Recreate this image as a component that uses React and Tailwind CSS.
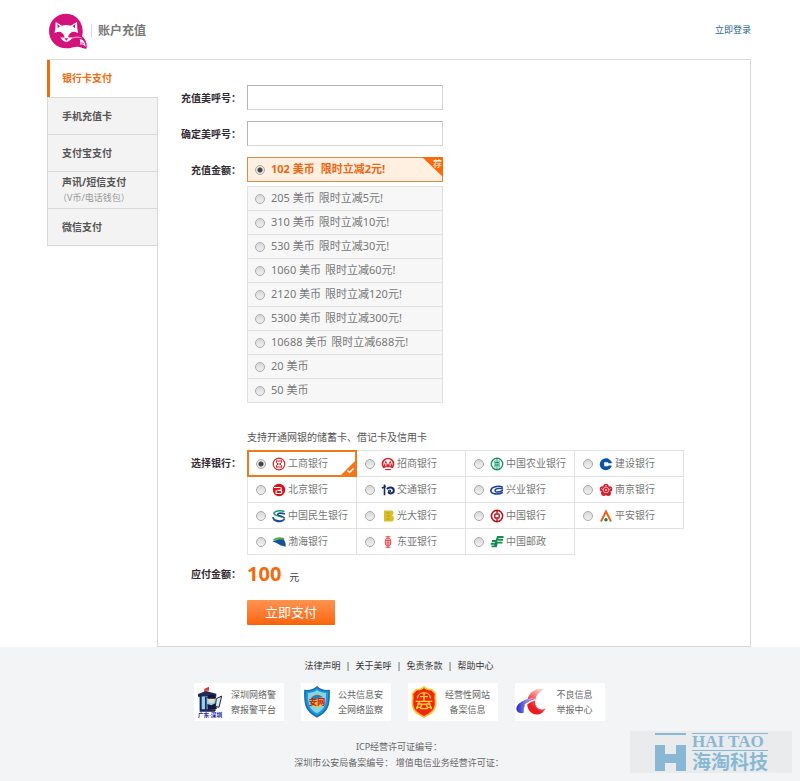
import { useState } from "react";

const tabs = [
  { title: "银行卡支付" },
  { title: "手机充值卡" },
  { title: "支付宝支付" },
  { title: "声讯/短信支付", note: "（V币/电话钱包）" },
  { title: "微信支付" },
];

const amounts = [
  { coins: "205 美币", offer: "限时立减5元!" },
  { coins: "310 美币", offer: "限时立减10元!" },
  { coins: "530 美币", offer: "限时立减30元!" },
  { coins: "1060 美币", offer: "限时立减60元!" },
  { coins: "2120 美币", offer: "限时立减120元!" },
  { coins: "5300 美币", offer: "限时立减300元!" },
  { coins: "10688 美币", offer: "限时立减688元!" },
  { coins: "20 美币" },
  { coins: "50 美币" },
];

const banks = [
  {
    name: "工商银行",
    mark: (
      <g fill="none" stroke="#d8232a">
        <circle cx="7" cy="7" r="5.8" strokeWidth="1.2" />
        <path d="M4.500 3.500v2l1.500 1.500-1.500 1.500v2M9.500 3.500v2L8 7l1.500 1.500v2M4.500 4h5M4.500 10h5M5.500 7h3" strokeWidth="1" />
      </g>
    ),
  },
  {
    name: "招商银行",
    mark: (
      <g>
        <circle cx="7" cy="7" r="5.500" fill="none" stroke="#d8232a" strokeWidth="1.700" />
        <path d="M2 10.200 4.800 3.400 7 8l2.200-4.600 2.800 6.800z" fill="#d8232a" />
        <path d="M4.800 6v3.200M9.200 6v3.200" stroke="#fff" strokeWidth="1" />
        <path d="M2.500 11.500h9" stroke="#fff" strokeWidth="1" />
      </g>
    ),
  },
  {
    name: "中国农业银行",
    mark: (
      <g fill="none" stroke="#16936a">
        <circle cx="7" cy="7" r="5.700" strokeWidth="1.400" />
        <path d="M7 2v10.500M5 3.500v7M9 3.500v7M5 5.500h4M5 8h4" strokeWidth="1" />
      </g>
    ),
  },
  {
    name: "建设银行",
    mark: (
      <g>
        <circle cx="6.800" cy="7.200" r="6" fill="#0b52a8" />
        <path d="M5.200 5.200h4v4h-4zM9 6.200h5v2.400H9z" fill="#fff" />
        <path d="M7.500.8 13.500 5.600H9.200z" fill="#0b52a8" />
      </g>
    ),
  },
  {
    name: "北京银行",
    mark: (
      <g>
        <circle cx="7" cy="7" r="6.200" fill="#d8131b" />
        <path d="M2 4.500h6a1.400 1.400 0 0 1 0 2.800H5.500M4.200 7.300v3.200h4a1.600 1.600 0 0 0 0-3.200" fill="none" stroke="#fff" strokeWidth="1.200" />
      </g>
    ),
  },
  {
    name: "交通银行",
    mark: (
      <g fill="none" stroke="#152a6b">
        <path d="M3.500 1.500v10.800M.8 5 5 3.500" strokeWidth="1.600" />
        <path d="M6 6.200C7.500 3.600 12.800 3.800 12.800 7.500c0 3.200-4.300 3.800-5.600 1.500" strokeWidth="2" />
        <circle cx="8.600" cy="8" r="1" strokeWidth="1.200" />
      </g>
    ),
  },
  {
    name: "兴业银行",
    mark: (
      <g fill="none" stroke="#16429a">
        <path d="M12.800 4.500C9 1.800.8 4 .8 7.600s7.200 4.600 12 1.600" strokeWidth="1.600" />
        <path d="M13 6.200C10.500 4.600 5 5.400 5 7.600s4.500 1.800 8-.4" strokeWidth="1.400" />
      </g>
    ),
  },
  {
    name: "南京银行",
    mark: (
      <g fill="#d41f30">
        <circle cx="7" cy="3.500" r="2.700" />
        <circle cx="3.400" cy="6" r="2.700" />
        <circle cx="10.600" cy="6" r="2.700" />
        <circle cx="4.800" cy="10.300" r="2.700" />
        <circle cx="9.200" cy="10.300" r="2.700" />
        <circle cx="7" cy="7" r="2.800" stroke="#fff" strokeWidth=".6" />
        <circle cx="7" cy="7" r=".9" fill="#fff" />
        <path d="M6 2.800h2M2.500 5.200l1 1.600M11.500 5.200l-1 1.600" stroke="#fff" strokeWidth=".6" />
      </g>
    ),
  },
  {
    name: "中国民生银行",
    mark: (
      <g fill="none" strokeWidth="1.600">
        <path d="M12.500 2.500C8 .8 2 2 2 4.500s7 2 8 4" stroke="#1c9a6c" />
        <path d="M13 5C8 3.500 5 4.200 6 5.800s6.500 1.500 6.500 3.700" stroke="#17508f" />
        <path d="M1 8c0 4 9.500 5.500 11.500 2M1.500 10.500c2 2 6 2.500 8.500 1.500" stroke="#17508f" />
      </g>
    ),
  },
  {
    name: "光大银行",
    mark: (
      <g>
        <path d="M3 1.500h6.500a2.500 2.500 0 0 1 .8 5A2.900 2.900 0 0 1 9.500 12.500H3z" fill="#d9bf28" />
        <path d="M5.500 4h3.200M5.500 7h3.500M5.500 10h3" stroke="#b99d14" strokeWidth=".9" />
      </g>
    ),
  },
  {
    name: "中国银行",
    mark: (
      <g fill="none" stroke="#b5121b">
        <circle cx="7" cy="7" r="5.600" strokeWidth="1.600" />
        <path d="M7 1v3.500M7 9.500V13" strokeWidth="1.400" />
        <rect x="4.800" y="5" width="4.400" height="4" rx=".8" strokeWidth="1.400" />
      </g>
    ),
  },
  {
    name: "平安银行",
    mark: (
      <g>
        <path d="M2 12.500 7 2.500l5 10" fill="none" stroke="#e8641b" strokeWidth="2" />
        <circle cx="7" cy="10.800" r="1.700" fill="#157a4e" />
      </g>
    ),
  },
  {
    name: "渤海银行",
    mark: (
      <g>
        <path d="M.5 5.500C3 2 8 1.500 12 3c1 2-1 2.500-2.500 2.300C6 4.300 4 4.700.5 5.500z" fill="#4fae3c" />
        <path d="M.5 6.500C4 4.300 8 4.300 11.500 4.500c2 2 2.500 4.500 2 7.500-2-1-3-1.500-5-1.500C6.500 9 3.500 7 .5 6.500z" fill="#17509c" />
      </g>
    ),
  },
  {
    name: "东亚银行",
    mark: (
      <g fill="none" stroke="#e0484d">
        <path d="M7 .8v2M7 11v2.200M4.500 1.800h5M4.500 12.200h5" strokeWidth="1" />
        <ellipse cx="7" cy="7" rx="2.900" ry="4" strokeWidth="1" />
        <path d="M4.500 5.500h5M4.500 7.200h5M4.500 9h5M7 3v8" strokeWidth=".9" />
      </g>
    ),
  },
  {
    name: "中国邮政",
    mark: (
      <g fill="none" stroke="#178a52" strokeWidth="1.900">
        <path d="M13.500 2H7.800L6.500 6H2M13 4.800H8M12.500 7.600H7l-1 3.800H1.500M7 4 4.500 12M.8 8.700h4.500" />
      </g>
    ),
  },
];

const radioClass =
  "m-0 h-2.5 w-2.5 shrink-0 appearance-none rounded-full border border-[#a9a9a9] bg-[linear-gradient(#d8d8d8,#f2f2f2)] checked:bg-[radial-gradient(circle,#444_0_2px,#e6e6e6_3px)]";

function FoxLogo() {
  return (
    <svg className="h-9 w-[39px]" viewBox="0 0 117 108" aria-hidden="true">
      <path
        d="M55 2C25 2 3 25 3 54s22 52 52 52c14 0 23-5 32-5 11 0 17 6 29 6 2-22-7-31-14-37 9-31-11-68-47-68z"
        fill="#d5127c"
      />
      <path
        d="M23 27c-1 16 0 22-4 32 10 0 13 5 17 12 5 10 12 15 19 15s14-5 19-15c4-7 7-12 17-12-4-10-3-16-4-32L68 38c-8-3-18-3-26 0z"
        fill="#fff"
      />
      <path d="M28 33l8 7-7 6zM82 33l-8 7 7 6zM23 59c12-6 23-1 27 14-12 3-20-2-27-14zM87 59c-12-6-23-1-27 14 12 3 20-2 27-14z" fill="#d5127c" />
      <path d="M49 76h12l-6 7z" fill="#d5127c" />
      <path d="M56 87c14-14 30-18 44-12" stroke="#fff" strokeWidth="2" fill="none" />
      <path d="M95 79c10-1 16 8 18 22-5-5-10-7-18-7 3-5 3-10 0-15z" fill="#fff" />
      <path d="M98 93l4-5 2 5 4-3" stroke="#d5127c" strokeWidth="2" fill="none" />
    </svg>
  );
}

function PoliceBooth() {
  return (
    <svg className="h-8 w-7" viewBox="0 0 78 96" aria-hidden="true">
      <path d="M22 8l14-6v12H25v7h-4z" fill="#df3d37" />
      <path d="M3 24l24-9 31 8v9H3z" fill="#252b59" />
      <path d="M8 32h48v40H8z" fill="#8fd0ee" />
      <path d="M6 29h5v45h43" stroke="#162358" strokeWidth="6" fill="none" />
      <path d="M24 32h5v40h-5z" fill="#20284e" />
      <circle cx="43" cy="42" r="9" fill="#f5d7bb" />
      <path d="M31 34c3-11 23-11 26 0l-2 4H32z" fill="#111736" />
      <path d="M31 54l12 4 12-6 5 16-28 5z" fill="#151a38" />
      <path d="M58 38l16-8-8 34-11-3z" fill="#cfe9f5" stroke="#222" strokeWidth="3" />
      <path d="M12 70h44v5H12z" fill="#222858" />
      <text x="39" y="94" textAnchor="middle" fontSize="17" fontWeight="700" fill="#2424a8">广东·深圳</text>
    </svg>
  );
}

function NetShield() {
  return (
    <svg className="h-8 w-7" viewBox="0 0 80 96" aria-hidden="true">
      <path d="M40 3c9 9 22 12 36 11 2 43-5 63-36 78C9 77 2 57 4 14 18 15 31 12 40 3z" fill="#1d9ade" stroke="#176fae" strokeWidth="5" />
      <path d="M40 12c8 7 17 9 27 9 1 34-5 49-27 61C18 70 12 55 13 21c10 0 19-2 27-9z" fill="#85d3ed" />
      <circle cx="40" cy="44" r="20" fill="#f4bd32" />
      <path d="M21 37c12-13 24-14 37-3-10 0-18 3-25 10" fill="#247fbf" />
      <text x="40" y="56" textAnchor="middle" fontSize="25" fontWeight="700" fill="#bd2027">安网</text>
    </svg>
  );
}

function BusinessShield() {
  return (
    <svg className="h-8 w-7" viewBox="0 0 80 96" aria-hidden="true">
      <path d="M40 3c7 8 15 9 23 8l12 13c-4 12 2 20-1 36-3 18-18 26-34 33C24 86 9 78 6 60 3 44 9 36 5 24l12-13c8 1 16 0 23-8z" fill="#ef2518" stroke="#f4c42c" strokeWidth="5" />
      <g fill="none" stroke="#ffd334" strokeWidth="4">
        <path d="M20 38c2-24 38-24 40 0M40 22v26M28 32h24M15 46h50M20 54h14M46 54h14M16 64h14M50 64h14M26 46l-8 24M54 46l8 24" />
        <path d="M30 68c0-18 20-18 20 0z" />
      </g>
    </svg>
  );
}

function ReportMark() {
  return (
    <svg className="h-8 w-8" viewBox="0 0 98 90" aria-hidden="true">
      <defs>
        <linearGradient id="report-red" x1="0" y1="1" x2=".6" y2="0">
          <stop offset=".35" stopColor="#e91c24" />
          <stop offset="1" stopColor="#ffc4be" />
        </linearGradient>
        <linearGradient id="report-blue">
          <stop stopColor="#262bc8" />
          <stop offset="1" stopColor="#c8ceff" />
        </linearGradient>
      </defs>
      <path d="M88 6C58 0 38 22 37 46c-1 42 42 50 57 18-14 9-30 2-32-15C60 30 72 14 88 6z" fill="url(#report-red)" />
      <path d="M27 78C5 84-2 66 10 52 22 40 44 32 60 33 38 41 24 57 27 78z" fill="url(#report-blue)" />
      <path d="M30 55c10-9 20-14 32-17" stroke="#fff" strokeWidth="4" fill="none" />
    </svg>
  );
}

const badges = [
  { lines: ["深圳网络警", "察报警平台"], Icon: PoliceBooth },
  { lines: ["公共信息安", "全网络监察"], Icon: NetShield },
  { lines: ["经营性网站", "备案信息"], Icon: BusinessShield },
  { lines: ["不良信息", "举报中心"], Icon: ReportMark },
];

const rowClass = "grid grid-cols-[83px_minmax(0,1fr)] gap-x-1.5";
const labelClass = "text-right font-bold leading-[26px] text-[#332b33]";
const inputClass =
  "h-[25px] w-[196px] border border-[#d4d4d4] border-t-[#b5b5b5] border-l-[#b5b5b5] px-2 outline-none";

export default function App() {
  const [tab, setTab] = useState(0);
  const [amount, setAmount] = useState("102 美币");
  const [bank, setBank] = useState("工商银行");

  return (
    <div lang="zh-CN" className="relative bg-white font-['Noto_Sans','Noto_Sans_CJK_SC',sans-serif] text-[10px] text-[#777]">
      <header className="mr-[49px] ml-[47px] flex h-[59px] items-center justify-between">
        <div className="flex items-center gap-1 pt-0.5 pl-px">
          <FoxLogo />
          <h1 className="flex items-center gap-1.5 text-[12px] font-bold text-[#777]">
            <span className="h-3.5 w-px bg-[#ddd]" />
            账户充值
          </h1>
        </div>
        <a href="#login" className="text-[9px] text-[#1f6594]">立即登录</a>
      </header>

      <div className="mr-[49px] ml-[47px] flex items-stretch border-t border-[#d9d9d9]">
        <nav className="w-[110px] shrink-0">
          {tabs.map((item, i) => (
            <button
              key={item.title}
              type="button"
              onClick={() => setTab(i)}
              className={
                "flex h-[37px] flex-col justify-center text-left font-bold leading-[15px] " +
                (i === tab
                  ? "relative w-[111px] border-l-3 border-[#f36b0c] bg-white pl-3 text-[#f36b0c]"
                  : "w-full border-t border-l border-[#d9d9d9] bg-[#f3f3f3] pl-3.5 text-[#555]")
              }
            >
              {item.title}
              {item.note && <span className="-ml-1 text-[9px] font-normal text-[#999]">{item.note}</span>}
            </button>
          ))}
          <div className="border-t border-[#d9d9d9]" />
        </nav>

        <form
          onSubmit={(e) => e.preventDefault()}
          className="flex min-w-0 flex-1 flex-col border-x border-b border-[#d9d9d9] pt-[25px] pb-[21px]"
        >
          <div className="flex flex-col gap-[11px]">
            <div className={rowClass}>
              <label htmlFor="account" className={labelClass + " h-[25px]"}>充值美呼号：</label>
              <input id="account" className={inputClass} />
            </div>
            <div className={rowClass}>
              <label htmlFor="confirm" className={labelClass + " h-[25px]"}>确定美呼号：</label>
              <input id="confirm" className={inputClass} />
            </div>
            <div className={rowClass} role="radiogroup" aria-labelledby="amount-label">
              <span id="amount-label" className={labelClass}>充值金额：</span>
              <div className="w-[196px]">
                <label className="relative flex h-[25px] items-center gap-1.5 border border-[#e28a3f] bg-[#fff0e2] pl-[7px] text-[11px] font-bold text-[#ef6510]">
                  <input type="radio" name="amount" className={radioClass} checked={amount === "102 美币"} onChange={() => setAmount("102 美币")} />
                  <span className="flex gap-1.5">
                    <span>102 美币</span>
                    <span>限时立减2元!</span>
                  </span>
                  <svg className="absolute -top-px -right-px h-5 w-[21px]" viewBox="0 0 21 20">
                    <path d="M0 0h21v20z" fill="#fa6a07" />
                    <text x="11" y="10" fontSize="9" fontWeight="400" fill="#fff">荐</text>
                  </svg>
                </label>
                <div className="mt-1 border-x border-t border-[#e0e0e0]">
                  {amounts.map((item) => (
                    <label key={item.coins} className="flex h-6 items-center gap-1.5 border-b border-[#e0e0e0] bg-[#f7f7f7] pl-[7px] text-[11px]">
                      <input type="radio" name="amount" className={radioClass} checked={amount === item.coins} onChange={() => setAmount(item.coins)} />
                      <span className="flex gap-1">
                        <span>{item.coins}</span>
                        {item.offer && <span>{item.offer}</span>}
                      </span>
                    </label>
                  ))}
                </div>
              </div>
            </div>
          </div>

          <div className={rowClass + " mt-6"} role="radiogroup" aria-labelledby="bank-label">
            <p className="col-start-2 h-[23px] leading-5 text-[#555]">支持开通网银的储蓄卡、借记卡及信用卡</p>
            <span id="bank-label" className={labelClass}>选择银行：</span>
            <div className="flex max-w-[437px] flex-wrap pb-px">
              {banks.map((item) => (
                <label
                  key={item.name}
                  className={
                    "-mr-px -mb-px flex h-[27px] w-[110px] items-center gap-1.5 " +
                    (bank === item.name ? "relative border-2 border-[#ef7a1e] pl-[7px]" : "border border-[#e2e2e2] pl-2")
                  }
                >
                  <input type="radio" name="bank" className={radioClass} checked={bank === item.name} onChange={() => setBank(item.name)} />
                  <span className="flex items-center gap-0.5 whitespace-nowrap">
                    <svg className="h-3.5 w-3.5" viewBox="0 0 14 14" aria-hidden="true">{item.mark}</svg>
                    {item.name}
                  </span>
                  {bank === item.name && (
                    <svg className="absolute right-0 bottom-0 h-3.5 w-3.5" viewBox="0 0 14 14" aria-hidden="true">
                      <path d="M14 0v14H0z" fill="#f5761a" />
                      <path d="M6.500 9.500 8.500 11.500 12.500 7.500" fill="none" stroke="#fff" strokeWidth="1.500" />
                    </svg>
                  )}
                </label>
              ))}
            </div>
          </div>

          <div className={rowClass + " mt-1 h-[30px] items-center"}>
            <span className={labelClass}>应付金额：</span>
            <p className="flex items-baseline gap-2 text-[#444]">
              <strong className="text-[20px] leading-[26px] text-[#f36b0c]">100</strong> 元
            </p>
          </div>
          <div className={rowClass + " mt-[11px]"}>
            <button
              type="submit"
              className="col-start-2 h-[25px] w-[88px] rounded-[1px] bg-linear-to-b from-[#ff934d] to-[#fa6400] text-[13px] leading-[25px] text-white"
            >
              立即支付
            </button>
          </div>
        </form>
      </div>

      <footer className="bg-[#f3f4f6] pr-[49px] pl-[47px] text-[9px] text-[#666]">
        <div className="flex h-9 items-center justify-center gap-[5px] pt-0.5 text-[#333]">
          <a href="#law">法律声明</a>
          <span>|</span>
          <a href="#about">关于美呼</a>
          <span>|</span>
          <a href="#terms">免责条款</a>
          <span>|</span>
          <a href="#help">帮助中心</a>
        </div>
        <div className="flex flex-wrap justify-center gap-[17px]">
          {badges.map(({ lines, Icon }) => (
            <a key={lines[0]} href="#badge" className="flex h-[38px] w-[90px] items-center bg-white pr-0.5 leading-[15px]">
              <span className="flex w-8 shrink-0 justify-center">
                <Icon />
              </span>
              <span className="flex-1 text-center">
                {lines[0]}
                <br />
                {lines[1]}
              </span>
            </a>
          ))}
        </div>
        <div className="pt-[18px] pb-[10px] text-center leading-4">
          <p>ICP经营许可证编号：</p>
          <p>深圳市公安局备案编号： 增值电信业务经营许可证：</p>
        </div>
      </footer>

      <div className="absolute right-2 bottom-2 flex h-[42px] w-[162px] gap-1.5 bg-[#e9ebed] pt-0.5 pl-[25px] text-[#88b8d4]">
        <svg className="h-[38px] w-[31px]" viewBox="0 0 31 38" aria-hidden="true">
          <path d="M0 0h31v2H0zM0 12h10v9h11v-9h10v26H21v-8H10v8H0z" fill="currentColor" />
        </svg>
        <div>
          <p className="border-y border-current font-['Liberation_Serif',serif] text-[17px] leading-4 font-bold">HAI TAO</p>
          <p className="text-[19px] leading-[23px] font-bold">海淘科技</p>
        </div>
      </div>
    </div>
  );
}
